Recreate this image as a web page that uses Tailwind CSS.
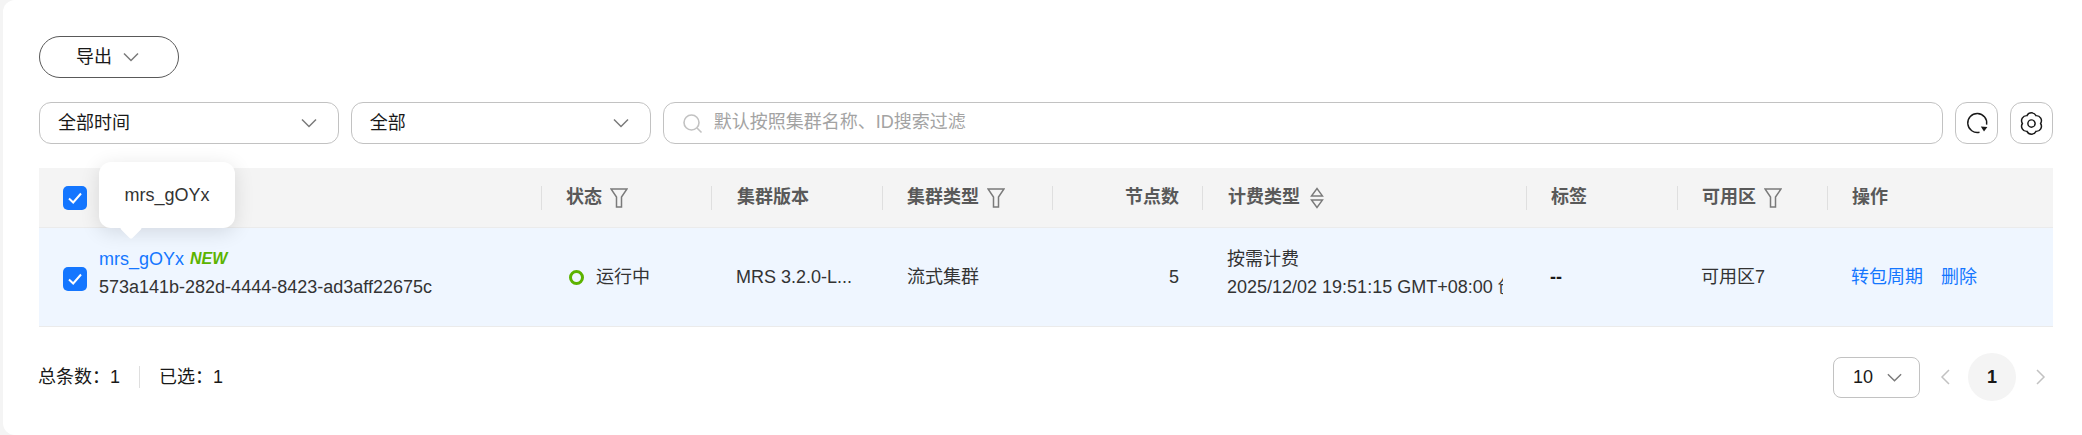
<!DOCTYPE html>
<html lang="en">
<head>
<meta charset="UTF-8">
<title>集群列表</title>
<script src="https://cdn.jsdelivr.net/npm/@tailwindcss/browser@4"></script>
</head>
<body class="bg-[#f4f4f4] w-[2082px] h-[435px] overflow-hidden font-['Liberation_Sans','Noto_Sans_CJK_SC',sans-serif] text-[18px] text-[#191919]">
<div class="relative ml-[3px] h-[435px] bg-white rounded-l-[12px] pl-[36px] pr-[29px] pt-[36px]">

  <!-- export -->
  <button class="flex items-center justify-center gap-[10px] w-[140px] h-[42px] pr-[2px] rounded-full border border-[#595959] text-[18px]">
    <span>导出</span>
    <svg width="18" height="18" viewBox="0 0 18 18" fill="none" stroke="#7a7a7a" stroke-width="1.5"><path d="M2 5.5 9 12.5 16 5.5"/></svg>
  </button>

  <!-- filters -->
  <div class="flex gap-[12px] mt-[24px] h-[42px]">
    <div class="w-[300px] flex items-center justify-between pl-[18px] pr-[20px] border border-[#c2c2c2] rounded-[12px]">
      <span>全部时间</span>
      <svg width="18" height="18" viewBox="0 0 18 18" fill="none" stroke="#7a7a7a" stroke-width="1.5"><path d="M2 5.5 9 12.5 16 5.5"/></svg>
    </div>
    <div class="w-[300px] flex items-center justify-between pl-[18px] pr-[20px] border border-[#c2c2c2] rounded-[12px]">
      <span>全部</span>
      <svg width="18" height="18" viewBox="0 0 18 18" fill="none" stroke="#7a7a7a" stroke-width="1.5"><path d="M2 5.5 9 12.5 16 5.5"/></svg>
    </div>
    <div class="w-[1281px] flex items-center gap-[11px] pl-[18px] border border-[#c2c2c2] rounded-[12px] text-[#a3a3a3]">
      <svg width="21" height="21" viewBox="0 0 21 21" fill="none" stroke="#c2c2c2" stroke-width="1.6"><circle cx="9.5" cy="9.5" r="7.5"/><path d="M15 15 19.5 19.5"/></svg>
      <span class="-mt-[1px]">默认按照集群名称、ID搜索过滤</span>
    </div>
    <div class="w-[43px] flex items-center justify-center border border-[#c2c2c2] rounded-[12px]">
      <svg width="24" height="24" viewBox="0 0 24 24" fill="none" stroke="#191919" stroke-width="1.4"><path d="M14.5 21.2A9.5 9.5 0 1 1 21.6 13.6"/><path d="M15.8 15.6 22.4 16 19 20.4Z" fill="#191919" stroke="none"/></svg>
    </div>
    <div class="w-[43px] flex items-center justify-center border border-[#c2c2c2] rounded-[12px]">
      <svg width="25" height="25" viewBox="0 0 22 22" fill="none" stroke="#191919" stroke-width="1.3"><path d="M7 4.07A4.5 4.5 0 0 1 15 4.07 4.5 4.5 0 0 1 19 11 4.5 4.5 0 0 1 15 17.93 4.5 4.5 0 0 1 7 17.93 4.5 4.5 0 0 1 3 11 4.5 4.5 0 0 1 7 4.07Z"/><circle cx="11" cy="11" r="3.2"/></svg>
    </div>
  </div>

  <!-- table header -->
  <div class="mt-[24px] h-[60px] grid grid-cols-[502px_170px_171px_170px_150px_324px_151px_150px_226px] items-center bg-[#f4f4f4] border-b border-[#ebebeb] font-bold text-[#595959]">
    <div class="pl-[24px] flex"><span class="w-[24px] h-[24px] rounded-[5px] bg-[#1476ff] flex items-center justify-center"><svg width="16" height="16" viewBox="0 0 16 16" fill="none" stroke="#fff" stroke-width="2"><path d="M2 8.5 6.2 12.5 14 3.5"/></svg></span></div>
    <div class="h-[24px] border-l border-[#dfdfdf] pl-[24px] flex items-center gap-[8px]">状态
      <svg width="18" height="20" viewBox="0 0 18 20" fill="none" stroke="#7a7a7a" stroke-width="1.5"><path d="M1 1H17L11.5 9V19H6.5V9Z"/></svg></div>
    <div class="h-[24px] border-l border-[#dfdfdf] pl-[25px] flex items-center">集群版本</div>
    <div class="h-[24px] border-l border-[#dfdfdf] pl-[24px] flex items-center gap-[8px]">集群类型
      <svg width="18" height="20" viewBox="0 0 18 20" fill="none" stroke="#7a7a7a" stroke-width="1.5"><path d="M1 1H17L11.5 9V19H6.5V9Z"/></svg></div>
    <div class="h-[24px] border-l border-[#dfdfdf] pr-[23px] flex items-center justify-end">节点数</div>
    <div class="h-[24px] border-l border-[#dfdfdf] pl-[25px] flex items-center gap-[10px]">计费类型
      <svg width="14" height="24" viewBox="0 0 14 24" fill="none" stroke="#7a7a7a" stroke-width="1.4"><path d="M1.5 10 7 2.5 12.5 10ZM1.5 14 7 21.5 12.5 14Z"/></svg></div>
    <div class="h-[24px] border-l border-[#dfdfdf] pl-[24px] flex items-center">标签</div>
    <div class="h-[24px] border-l border-[#dfdfdf] pl-[24px] flex items-center gap-[8px]">可用区
      <svg width="18" height="20" viewBox="0 0 18 20" fill="none" stroke="#7a7a7a" stroke-width="1.5"><path d="M1 1H17L11.5 9V19H6.5V9Z"/></svg></div>
    <div class="h-[24px] border-l border-[#dfdfdf] pl-[24px] flex items-center">操作</div>
  </div>

  <!-- table row -->
  <div class="h-[99px] grid grid-cols-[502px_170px_171px_170px_150px_324px_151px_150px_226px] items-center bg-[#eff6ff] border-b border-[#ebebeb] text-[#333]">
    <div class="pl-[24px] flex items-center gap-[12px]">
      <span class="w-[24px] h-[24px] mt-[3px] rounded-[5px] bg-[#1476ff] flex items-center justify-center"><svg width="16" height="16" viewBox="0 0 16 16" fill="none" stroke="#fff" stroke-width="2"><path d="M2 8.5 6.2 12.5 14 3.5"/></svg></span>
      <div class="leading-[28px] -mt-[9px]">
        <div class="flex items-center gap-[6px]"><span class="text-[#1476ff]">mrs_gOYx</span><span class="text-[#5cb300] italic font-bold text-[16px]">NEW</span></div>
        <div>573a141b-282d-4444-8423-ad3aff22675c</div>
      </div>
    </div>
    <div class="pl-[28px] flex items-center gap-[12px]"><span class="w-[15px] h-[15px] rounded-full border-[3px] border-[#5cb300]"></span>运行中</div>
    <div class="pl-[25px]">MRS 3.2.0-L...</div>
    <div class="pl-[25px]">流式集群</div>
    <div class="pr-[23px] text-right">5</div>
    <div class="pl-[25px] leading-[28px] pr-[23px] whitespace-nowrap overflow-hidden -mt-[9px]">
      <div>按需计费</div>
      <div class="overflow-hidden">2025/12/02 19:51:15 GMT+08:00 创建</div>
    </div>
    <div class="pl-[24px] text-[#191919] font-bold">--</div>
    <div class="pl-[24px]">可用区7</div>
    <div class="pl-[24px] flex gap-[18px] text-[#1476ff]"><span>转包周期</span><span>删除</span></div>
  </div>

  <!-- footer -->
  <div class="mt-[26px] pr-[6px] flex items-center justify-between">
    <div class="flex items-center -ml-[1px]">
      <span>总条数：1</span>
      <span class="w-px h-[22px] bg-[#dfdfdf] mx-[19px]"></span>
      <span>已选：1</span>
    </div>
    <div class="flex items-center">
      <div class="w-[87px] h-[41px] flex items-center justify-between pl-[19px] pr-[16px] border border-[#c2c2c2] rounded-[8px]">
        <span>10</span>
        <svg width="17" height="17" viewBox="0 0 18 18" fill="none" stroke="#7a7a7a" stroke-width="1.5"><path d="M2 5.5 9 12.5 16 5.5"/></svg>
      </div>
      <svg class="ml-[19px]" width="12" height="18" viewBox="0 0 12 18" fill="none" stroke="#c2c2c2" stroke-width="1.5"><path d="M10 2 3 9 10 16"/></svg>
      <span class="ml-[17px] w-[48px] h-[48px] rounded-full bg-[#f4f4f4] flex items-center justify-center font-bold">1</span>
      <svg class="ml-[19px]" width="12" height="18" viewBox="0 0 12 18" fill="none" stroke="#c2c2c2" stroke-width="1.5"><path d="M2 2 9 9 2 16"/></svg>
    </div>
  </div>

  <!-- tooltip over the name cell -->
  <div class="absolute left-[96px] top-[162px] w-[136px] h-[66px] pt-[1px] bg-white rounded-[12px] shadow-[0_4px_20px_rgba(0,0,0,0.12)] flex items-center justify-center text-[#333]">
    mrs_gOYx
    <span class="absolute left-[24px] -bottom-[8px] w-[16px] h-[16px] bg-white rotate-45 rounded-[2px]"></span>
  </div>
</div>
</body>
</html>
